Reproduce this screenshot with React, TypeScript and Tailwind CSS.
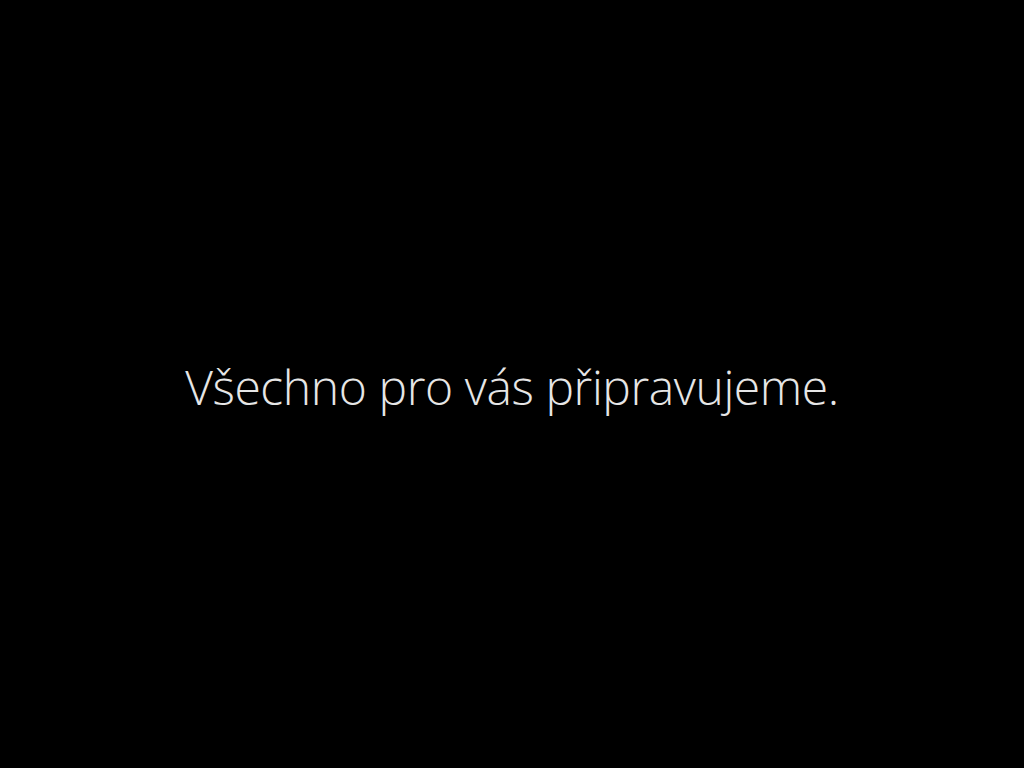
export default function App() {
  return (
    <div className="flex h-screen w-full items-center justify-center bg-black">
      <p
        className="mt-[6px] text-[48px] font-light leading-none tracking-[-0.4px] text-[#e6e6e6]"
        style={{ fontFamily: '"Open Sans", "Noto Sans", sans-serif' }}
      >
        Všechno pro vás připravujeme.
      </p>
    </div>
  );
}
